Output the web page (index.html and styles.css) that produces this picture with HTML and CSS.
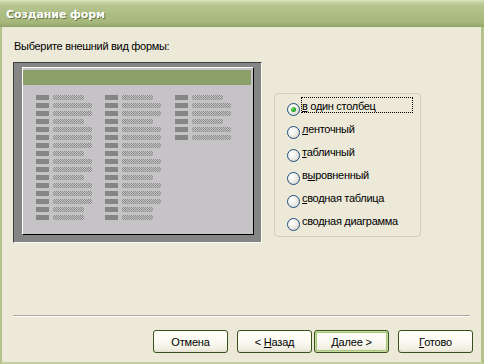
FILE: index.html
```html
<!DOCTYPE html>
<html lang="ru">
<head>
<meta charset="utf-8">
<title>Создание форм</title>
<link rel="stylesheet" href="styles.css">
</head>
<body>
<div class="window">
  <div class="titlebar"><span class="title">Создание форм</span></div>
  <div class="client">
    <p class="prompt">Выберите внешний вид формы:</p>
    <div class="main">
      <div class="preview">
        <div class="sheet">
          <div class="sheet-header"></div>
          <div class="cols">
            <div class="col">
              <div class="row"><i class="lbl"></i><i class="fld s"></i></div>
              <div class="row"><i class="lbl"></i><i class="fld"></i></div>
              <div class="row"><i class="lbl"></i><i class="fld"></i></div>
              <div class="row"><i class="lbl"></i><i class="fld s"></i></div>
              <div class="row"><i class="lbl"></i><i class="fld"></i></div>
              <div class="row"><i class="lbl"></i><i class="fld"></i></div>
              <div class="row"><i class="lbl"></i><i class="fld"></i></div>
              <div class="row"><i class="lbl"></i><i class="fld s"></i></div>
              <div class="row"><i class="lbl"></i><i class="fld"></i></div>
              <div class="row"><i class="lbl"></i><i class="fld"></i></div>
              <div class="row"><i class="lbl"></i><i class="fld s"></i></div>
              <div class="row"><i class="lbl"></i><i class="fld"></i></div>
              <div class="row"><i class="lbl"></i><i class="fld"></i></div>
              <div class="row"><i class="lbl"></i><i class="fld"></i></div>
              <div class="row"><i class="lbl"></i><i class="fld s"></i></div>
              <div class="row"><i class="lbl"></i><i class="fld s"></i></div>
            </div>
            <div class="col">
              <div class="row"><i class="lbl"></i><i class="fld s"></i></div>
              <div class="row"><i class="lbl"></i><i class="fld"></i></div>
              <div class="row"><i class="lbl"></i><i class="fld"></i></div>
              <div class="row"><i class="lbl"></i><i class="fld s"></i></div>
              <div class="row"><i class="lbl"></i><i class="fld"></i></div>
              <div class="row"><i class="lbl"></i><i class="fld"></i></div>
              <div class="row"><i class="lbl"></i><i class="fld"></i></div>
              <div class="row"><i class="lbl"></i><i class="fld s"></i></div>
              <div class="row"><i class="lbl"></i><i class="fld"></i></div>
              <div class="row"><i class="lbl"></i><i class="fld"></i></div>
              <div class="row"><i class="lbl"></i><i class="fld s"></i></div>
              <div class="row"><i class="lbl"></i><i class="fld"></i></div>
              <div class="row"><i class="lbl"></i><i class="fld"></i></div>
              <div class="row"><i class="lbl"></i><i class="fld"></i></div>
              <div class="row"><i class="lbl"></i><i class="fld s"></i></div>
              <div class="row"><i class="lbl"></i><i class="fld s"></i></div>
            </div>
            <div class="col">
              <div class="row"><i class="lbl"></i><i class="fld s"></i></div>
              <div class="row"><i class="lbl"></i><i class="fld"></i></div>
              <div class="row"><i class="lbl"></i><i class="fld"></i></div>
              <div class="row"><i class="lbl"></i><i class="fld s"></i></div>
              <div class="row"><i class="lbl"></i><i class="fld"></i></div>
              <div class="row"><i class="lbl"></i><i class="fld"></i></div>
            </div>
          </div>
        </div>
      </div>
      <div class="options">
        <label class="opt"><span class="radio checked"></span><span class="text focus"><u>в</u> один столбец</span></label>
        <label class="opt"><span class="radio"></span><span class="text"><u>л</u>енточный</span></label>
        <label class="opt"><span class="radio"></span><span class="text"><u>т</u>абличный</span></label>
        <label class="opt"><span class="radio"></span><span class="text">в<u>ы</u>ровненный</span></label>
        <label class="opt"><span class="radio"></span><span class="text"><u>с</u>водная таблица</span></label>
        <label class="opt"><span class="radio"></span><span class="text">сводная <u>д</u>иаграмма</span></label>
      </div>
    </div>
    <div class="separator"></div>
    <div class="buttons">
      <button class="btn">Отмена</button>
      <button class="btn">&lt; <u>Н</u>азад</button>
      <button class="btn default"><u>Д</u>алее &gt;</button>
      <button class="btn"><u>Г</u>отово</button>
    </div>
  </div>
</div>
</body>
</html>
```

FILE: styles.css
```css
* { box-sizing: border-box; }
html, body { margin: 0; padding: 0; }
body {
  width: 484px;
  height: 364px;
  overflow: hidden;
  background: #ece9d8;
  font-family: "Liberation Sans", Arial, sans-serif;
  font-size: 11px;
  color: #000;
}
.window {
  width: 484px;
  height: 364px;
  display: flex;
  flex-direction: column;
}
.titlebar {
  height: 27px;
  flex: none;
  display: flex;
  align-items: center;
  padding-left: 6px;
  background: linear-gradient(#dfe6c6 0, #c8d3a4 2px, #b6c48f 6px, #acbd83 14px, #a7b87d 22px, #97a970 26px, #8c9e64 27px);
}
.title {
  color: #fff;
  font-family: "DejaVu Sans", sans-serif;
  font-weight: bold;
  font-size: 11px;
  letter-spacing: -0.1px;
  text-shadow: 1px 1px 0 #687a45;
  margin-top: 1px;
}
.client {
  flex: 1;
  display: flex;
  flex-direction: column;
  background: #ece9d8;
  border-left: 2px solid #b4c38c;
  border-right: 3px solid #b4c38c;
  border-bottom: 2px solid #c4d19f;
  padding: 0 8px 9px 11px;
}
.prompt {
  margin: 13px 0 0 0;
  padding-left: 1px;
  line-height: 13px;
  height: 13px;
  letter-spacing: -0.3px;
}
.main {
  display: flex;
  align-items: flex-start;
  margin-top: 9px;
}
.preview {
  width: 249px;
  height: 181px;
  background: #858585;
  border-top: 1px solid #3f3f3f;
  border-left: 1px solid #3f3f3f;
  border-right: 1px solid #fbfbf6;
  border-bottom: 1px solid #fbfbf6;
  padding: 4px 7px 7px 8px;
}
.sheet {
  width: 232px;
  height: 168px;
  background: #c6c3c6;
  border-top: 1px solid #fff;
  border-left: 1px solid #fff;
  border-right: 1px solid #000;
  border-bottom: 1px solid #000;
  padding: 2px 2px 0 0;
}
.sheet-header {
  height: 15px;
  background: #8aa068;
}
.cols {
  display: grid;
  grid-template-columns: 69px 70px 70px;
  padding: 10px 0 0 13px;
}
.col {
  display: flex;
  flex-direction: column;
  gap: 3px;
}
.row {
  display: flex;
  gap: 4px;
  height: 5px;
}
.lbl {
  width: 13px;
  height: 5px;
  background: #858585;
}
.fld {
  width: 39px;
  height: 5px;
  background: repeating-conic-gradient(#8a8a8a 0 25%, #c6c3c6 0 50%) 0 0 / 2px 2px;
}
.fld.s { width: 31px; }
.options {
  width: 147px;
  height: 144px;
  margin: 31px 0 0 12px;
  border: 1px solid #d0d0bf;
  border-radius: 4px;
  padding: 3px 0 0 12px;
  display: flex;
  flex-direction: column;
}
.opt {
  height: 23px;
  display: flex;
  align-items: flex-start;
  gap: 1px;
}
.radio {
  width: 13px;
  height: 13px;
  border-radius: 50%;
  border: 1px solid #1c5180;
  background: radial-gradient(circle at 35% 35%, #ffffff 0, #f4f3ee 35%, #dcdad0 80%, #d2d0c4 100%);
  display: flex;
  align-items: center;
  justify-content: center;
  flex: none;
  margin-top: 6px;
}
.radio.checked::after {
  content: "";
  width: 5px;
  height: 5px;
  border-radius: 50%;
  background: radial-gradient(circle at 35% 35%, #7ae07a 0, #2bb02b 45%, #188a18 100%);
}
.text {
  padding: 2px 1px 0 0;
  border: 1px dotted transparent;
  line-height: 12px;
  letter-spacing: -0.3px;
  white-space: nowrap;
}
.text.focus {
  border-color: #000;
  width: 112px;
}
.separator {
  margin-top: auto;
  height: 2px;
  border-top: 1px solid #aca899;
  border-bottom: 1px solid #fff;
  margin-right: 3px;
}
.buttons {
  display: flex;
  justify-content: flex-end;
  gap: 9px;
  margin-top: 13px;
}
.btn {
  width: 75px;
  height: 23px;
  font: inherit;
  letter-spacing: -0.2px;
  color: #000;
  border: 1px solid #37521d;
  border-radius: 3px;
  background: linear-gradient(#fffffa 0, #fbfaf2 50%, #f1efe2 85%, #e3e0cf 100%);
  padding: 0;
}
.btn.default {
  margin-left: -7px;
  box-shadow: inset 0 0 0 1px #c7dca0, inset 0 0 0 2px #a9c77a;
}
```
